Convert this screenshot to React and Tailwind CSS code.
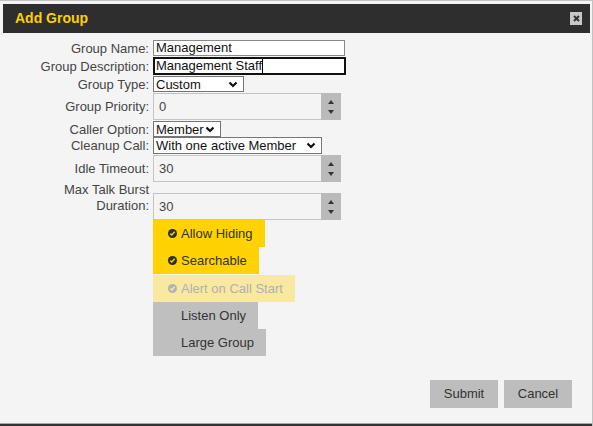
import React from "react";

function Chevron() {
  return (
    <svg width="10" height="7" viewBox="0 0 10 7" className="shrink-0">
      <polyline points="1.5,1.5 5,5 8.5,1.5" fill="none" stroke="#111" strokeWidth="2.2" />
    </svg>
  );
}

function Select({ value, width }) {
  return (
    <div
      className={`flex items-center justify-between border border-[#767676] bg-white pl-[2px] pr-[5px] h-full text-[13px] text-[#111] leading-none ${width}`}
    >
      <span>{value}</span>
      <Chevron />
    </div>
  );
}

function NumberBox({ value }) {
  return (
    <div className="flex h-full w-[188px]">
      <div className="flex-1 flex items-center border border-r-0 border-[#c4c4c4] bg-[#f4f4f4] pl-[5px] text-[13px] text-[#444]">
        {value}
      </div>
      <div className="w-[20px] bg-[#bababa] flex flex-col items-center justify-center gap-[6px]">
        <svg width="6" height="4" viewBox="0 0 6 4">
          <polygon points="3,0 6,4 0,4" fill="#333" />
        </svg>
        <svg width="6" height="4" viewBox="0 0 6 4">
          <polygon points="0,0 6,0 3,4" fill="#333" />
        </svg>
      </div>
    </div>
  );
}

function Row({ label, h, mt, children }) {
  return (
    <div className={`flex items-center ${h} ${mt}`}>
      <div className="w-[146px] text-right text-[13px] text-[#444] pr-0 leading-none">{label}</div>
      <div className="ml-[4px] h-full flex items-center">{children}</div>
    </div>
  );
}

function Check({ muted }) {
  return (
    <svg width="9" height="9" viewBox="0 0 9 9" className="shrink-0">
      <circle cx="4.5" cy="4.5" r="4.5" fill={muted ? "#b3b3b3" : "#2f2f2f"} />
      <polyline points="2.3,4.6 3.9,6 6.6,2.8" fill="none" stroke={muted ? "#f9e8a0" : "#ffd200"} strokeWidth="1.4" />
    </svg>
  );
}

function Toggle({ label, variant, icon, mt = "" }) {
  const bg =
    variant === "on" ? "bg-[#ffd200] text-[#333]" : variant === "muted" ? "bg-[#f9e8a0] text-[#b0b0b0]" : "bg-[#bfbfbf] text-[#333]";
  return (
    <div className={`flex items-center h-[27px] pl-[15px] pr-[12px] self-start text-[13px] ${bg} ${mt}`}>
      {icon ? <Check muted={variant === "muted"} /> : <span className="w-[9px] shrink-0" />}
      <span className="ml-[4px]">{label}</span>
    </div>
  );
}

export default function App() {
  return (
    <div
      className="w-[593px] h-[426px] bg-[#f4f4f4] border-t border-r border-[#c2c2c2] flex flex-col overflow-hidden"
      style={{ fontFamily: '"Liberation Sans", Arial, sans-serif' }}
    >
      <div className="pl-[3px] pr-[2px] pt-[3px]">
        <div className="h-[29px] bg-[#2e2e2e] flex items-center justify-between pl-[12px] pr-[8px]">
          <span
            className="text-[14px] font-bold text-[#ffd000]"
            style={{ fontFamily: '"Liberation Sans Narrow", "Liberation Sans", Arial, sans-serif' }}
          >
            Add Group
          </span>
          <div className="w-[12px] h-[13px] bg-[#c8c8c8] flex items-center justify-center">
            <svg width="7" height="7" viewBox="0 0 7 7">
              <path d="M1 1 L6 6 M6 1 L1 6" stroke="#333" strokeWidth="2" />
            </svg>
          </div>
        </div>
      </div>

      <div className="flex-1 flex flex-col pl-[3px] pt-[7px] relative">
        <Row label="Group Name:" h="h-[16px]" mt="">
          <div className="w-[192px] h-full border border-[#8a8a8a] bg-white pl-[2px] flex items-center text-[13px] text-[#111]">
            Management
          </div>
        </Row>
        <Row label="Group Description:" h="h-[18px]" mt="mt-[1px]">
          <div className="w-[193px] h-full border-2 border-[#111] bg-white pl-[1px] flex items-center text-[13px] text-[#111]">
            Management Staff<span className="inline-block w-[1px] h-[14px] bg-black" />
          </div>
        </Row>
        <Row label="Group Type:" h="h-[16px]" mt="mt-[1px]">
          <Select value="Custom" width="w-[91px]" />
        </Row>
        <Row label="Group Priority:" h="h-[27px]" mt="mt-[1px]">
          <NumberBox value="0" />
        </Row>
        <Row label="Caller Option:" h="h-[16px]" mt="mt-[1px]">
          <Select value="Member" width="w-[68px]" />
        </Row>
        <Row label="Cleanup Call:" h="h-[17px]" mt="">
          <Select value="With one active Member" width="w-[169px]" />
        </Row>
        <Row label="Idle Timeout:" h="h-[27px]" mt="mt-[1px]">
          <NumberBox value="30" />
        </Row>
        <div className="flex items-end h-[37px] mt-[1px]">
          <div className="w-[146px] text-right text-[13px] text-[#444] leading-[16px] mb-[6px]">
            Max Talk Burst
            <br />
            Duration:
          </div>
          <div className="ml-[4px] h-[27px]">
            <NumberBox value="30" />
          </div>
        </div>
        <div className="flex flex-col ml-[150px]">
          <Toggle label="Allow Hiding" variant="on" icon />
          <Toggle label="Searchable" variant="on" icon />
          <Toggle label="Alert on Call Start" variant="muted" icon mt="mt-[1px]" />
          <Toggle label="Listen Only" variant="off" />
          <Toggle label="Large Group" variant="off" />
        </div>
        <div className="flex justify-end gap-[6px] mr-[20px] mt-[24px]">
          <div className="w-[68px] h-[28px] bg-[#bdbdbd] flex items-center justify-center text-[13px] text-[#333]">
            Submit
          </div>
          <div className="w-[68px] h-[28px] bg-[#bdbdbd] flex items-center justify-center text-[13px] text-[#333]">
            Cancel
          </div>
        </div>
      </div>
      <div className="h-[1px] bg-[#a8a8a8]" />
      <div className="h-[2px] bg-[#333]" />
    </div>
  );
}
